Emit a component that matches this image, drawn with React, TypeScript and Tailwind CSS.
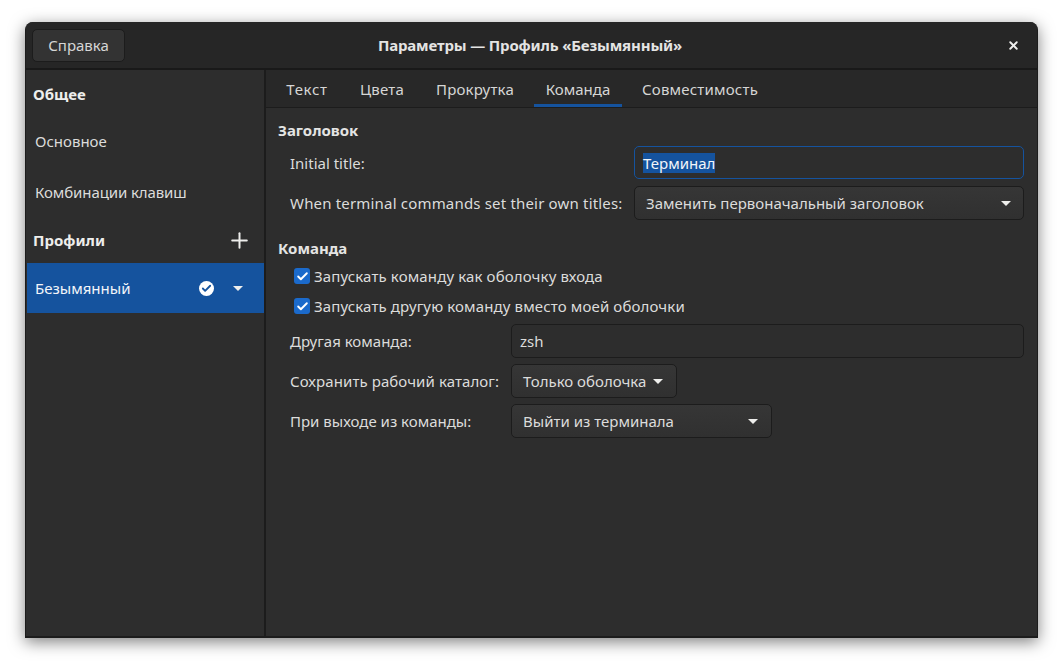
import { Check, Plus, X } from 'lucide-react';

const labelClass = 'text-[15px] leading-5 text-[#dcdcdb]';
const controlClass =
  'flex items-center rounded-[5px] border border-[#1c1c1c] text-[15px] leading-5 text-[#dcdcdb]';
const comboClass = controlClass + ' bg-gradient-to-b from-[#363636] to-[#303030]';

const tabs = [
  { name: 'Текст', width: 'w-[66px]', tracking: 'tracking-[0.7px]' },
  { name: 'Цвета', width: 'w-[68px]', tracking: 'tracking-[0.2px]' },
  { name: 'Прокрутка', width: 'w-[102px]', tracking: 'tracking-[0.2px]' },
  { name: 'Команда', width: 'w-[88px]', tracking: '' },
  { name: 'Совместимость', width: 'w-[140px]', tracking: 'tracking-[0.2px]' },
];

function Caret({ className = '' }: { className?: string }) {
  return (
    <svg width="10" height="5" viewBox="0 0 10 5" className={className}>
      <path d="M0 0h10L5 5z" fill="#eeeeec" />
    </svg>
  );
}

function CheckRow({ text, className = '' }: { text: string; className?: string }) {
  return (
    <div className={'flex items-center ' + className}>
      <span className="flex h-4 w-4 items-center justify-center rounded-[3px] bg-[#1b6acb]">
        <Check size={13} strokeWidth={3.5} color="#ffffff" />
      </span>
      <span className={labelClass + ' ml-[4px] tracking-[0.13px]'}>{text}</span>
    </div>
  );
}

export default function App() {
  return (
    <div className="h-[666px] w-[1063px] bg-white pl-[25px] pt-[22px] font-['Noto_Sans',sans-serif]">
      <div className="flex h-[616px] w-[1013px] flex-col overflow-hidden rounded-t-[8px] border border-t-0 border-b-2 border-[#1c1c1c] bg-[#2d2d2d] shadow-[0_4px_16px_rgba(0,0,0,0.5)]">
        {/* header */}
        <div className="grid h-[48px] shrink-0 grid-cols-[1fr_auto_1fr] items-center border-b-2 border-[#191919] bg-[#262626] pl-[6px] pr-[17px]">
          <button className="flex h-[33px] w-[93px] items-center justify-center rounded-[5px] border border-[#1c1c1c] bg-[#333333] text-[15px] text-[#d6d6d5]">
            Справка
          </button>
          <span className="pl-[8px] pt-px text-center text-[15px] font-bold tracking-[-0.15px] text-[#e4e4e3]">
            Параметры — Профиль «Безымянный»
          </span>
          <X size={13} strokeWidth={3.5} color="#eeeeec" className="justify-self-end" />
        </div>

        <div className="flex min-h-0 flex-1">
          {/* sidebar */}
          <aside className="w-[240px] shrink-0 border-r-2 border-[#1c1c1c]">
            <div className="flex h-[50px] items-center pl-[7px] pb-[1px] text-[15px] font-bold text-[#eeeeec]">Общее</div>
            <div className="flex h-[46px] items-center pb-[3px] pl-[9px] text-[15px] text-[#dcdcdb]">Основное</div>
            <div className="flex h-[52px] items-center pl-[9px] text-[15px] tracking-[-0.1px] text-[#dcdcdb]">
              Комбинации клавиш
            </div>
            <div className="flex h-[45px] items-center justify-between pb-[1px] pl-[7px] pr-[12px] text-[15px] font-bold text-[#eeeeec]">
              Профили
              <Plus size={25} strokeWidth={1.9} color="#eeeeec" />
            </div>
            <div className="ml-px flex h-[50px] w-[237px] items-center bg-[#15539e] pl-[8px] text-[15px] text-[#f2f5f9]">
              <span className="flex-1">Безымянный</span>
              <span className="mr-[19px] flex h-[15px] w-[15px] items-center justify-center rounded-full bg-white">
                <Check size={11} strokeWidth={4} color="#15539e" />
              </span>
              <Caret className="mr-[21px]" />
            </div>
          </aside>

          <main className="min-w-0 flex-1">
            {/* tabs */}
            <div className="flex h-[38px] items-stretch gap-[8px] border-b border-[#1c1c1c] bg-[#282828] pl-[8px]">
              {tabs.map((t) => (
                <div
                  key={t.name}
                  className={
                    'flex items-center justify-center text-[15px] text-[#d6d6d5] ' +
                    t.width +
                    ' ' +
                    t.tracking +
                    ' ' +
                    (t.name === 'Команда' ? 'border-b-[3px] border-[#15539e] pt-[5px]' : 'pt-[2px]')
                  }
                >
                  {t.name}
                </div>
              ))}
            </div>

            <div className="pl-[12px] pr-[13px]">
              <div className="mt-[12px] text-[15px] font-bold leading-5 text-[#e4e4e3]">Заголовок</div>

              <div className="mt-[6px] flex items-center pl-[12px]">
                <span className={labelClass + ' w-[344px]'}>Initial title:</span>
                <div className="flex h-[33px] flex-1 items-center rounded-[5px] border border-[#15539e] bg-[#2d2d2d] pl-[8px] text-[15px] text-[#f2f5f9]">
                  <span className="bg-[#15539e] leading-5">Терминал</span>
                </div>
              </div>

              <div className="mt-[7px] flex items-center pl-[12px]">
                <span className={labelClass + ' w-[344px] tracking-[0.18px]'}>
                  When terminal commands set their own titles:
                </span>
                <div className={comboClass + ' h-[34px] flex-1 justify-between pl-[11px] pr-[12px]'}>
                  Заменить первоначальный заголовок
                  <Caret />
                </div>
              </div>

              <div className="mt-[18px] text-[15px] font-bold leading-5 text-[#e4e4e3]">Команда</div>

              <CheckRow text="Запускать команду как оболочку входа" className="ml-[16px] mt-[8px]" />
              <CheckRow text="Запускать другую команду вместо моей оболочки" className="ml-[16px] mt-[10px]" />

              <div className="mt-[8px] flex items-center pl-[12px]">
                <span className={labelClass + ' w-[221px]'}>Другая команда:</span>
                <div className={controlClass + ' h-[34px] flex-1 bg-[#2d2d2d] pl-[8px]'}>zsh</div>
              </div>

              <div className="mt-[6px] flex items-center pl-[12px]">
                <span className={labelClass + ' w-[221px] tracking-[0.08px]'}>Сохранить рабочий каталог:</span>
                <div className={comboClass + ' h-[34px] w-[166px] justify-between pl-[11px] pr-[13px]'}>
                  Только оболочка
                  <Caret />
                </div>
              </div>

              <div className="mt-[6px] flex items-center pl-[12px]">
                <span className={labelClass + ' w-[221px]'}>При выходе из команды:</span>
                <div className={comboClass + ' h-[34px] w-[261px] justify-between pl-[11px] pr-[13px]'}>
                  Выйти из терминала
                  <Caret />
                </div>
              </div>
            </div>
          </main>
        </div>
      </div>
    </div>
  );
}
